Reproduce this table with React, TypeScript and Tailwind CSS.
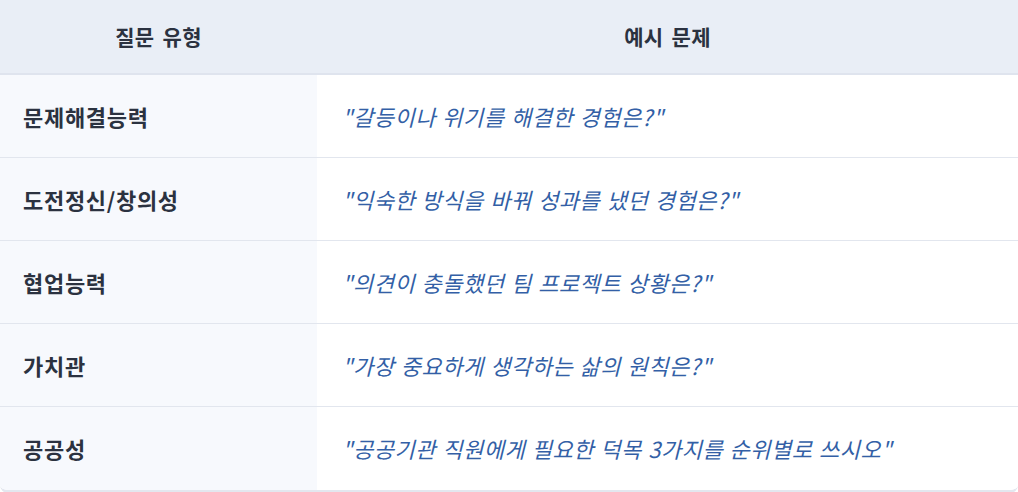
import React from "react";

const rows = [
  ["문제해결능력", "\"갈등이나 위기를 해결한 경험은?\""],
  ["도전정신/창의성", "\"익숙한 방식을 바꿔 성과를 냈던 경험은?\""],
  ["협업능력", "\"의견이 충돌했던 팀 프로젝트 상황은?\""],
  ["가치관", "\"가장 중요하게 생각하는 삶의 원칙은?\""],
  ["공공성", "\"공공기관 직원에게 필요한 덕목 3가지를 순위별로 쓰시오\""],
];

export default function App() {
  return (
    <div
      className="w-[1018px] h-[492px] bg-white overflow-hidden"
      style={{ fontFamily: '"Noto Sans CJK KR", "Noto Sans", sans-serif' }}
    >
      <div className="w-[1018px] rounded-b-lg overflow-hidden border-b-[3px] border-[#e3e7ef]">
        <div className="flex h-[75px] bg-[#e9eef6] border-b-2 border-[#dfe4ee]">
          <div className="w-[317px] flex items-center justify-center text-[21px] font-bold text-[#2b3240] tracking-[0.3px] [word-spacing:3px]">
            질문 유형
          </div>
          <div className="flex-1 flex items-center justify-center text-[21px] font-bold text-[#2b3240] tracking-[0.3px] [word-spacing:3px]">
            예시 문제
          </div>
        </div>
        {rows.map(([a, b], i) => (
          <div
            key={i}
            className={`flex h-[83px] ${i < rows.length - 1 ? "border-b border-[#e2e6ee]" : ""}`}
          >
            <div className="w-[317px] bg-[#f7f9fd] flex items-center pl-[23px] text-[22px] font-bold text-[#2b3240] tracking-[0.7px]">
              {a}
            </div>
            <div className="flex-1 bg-white flex items-center pl-[25px] text-[22px] font-normal italic text-[#335fa6] tracking-[0.5px] [word-spacing:1px]">
              {b}
            </div>
          </div>
        ))}
      </div>
    </div>
  );
}
